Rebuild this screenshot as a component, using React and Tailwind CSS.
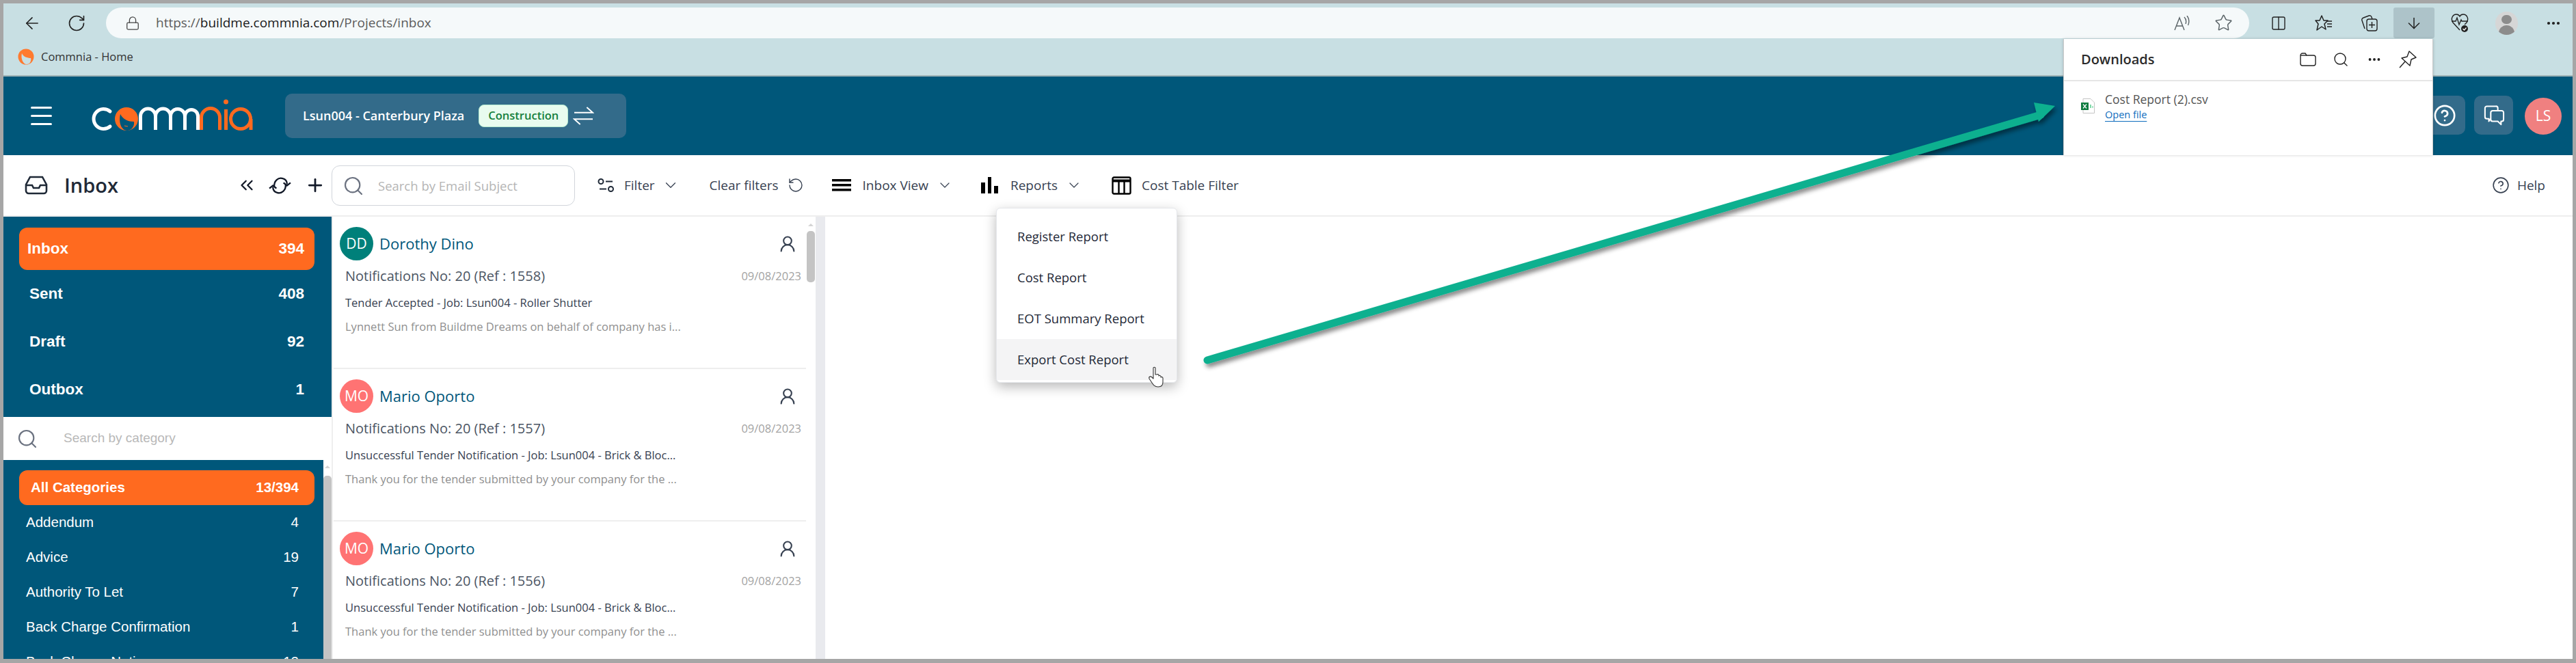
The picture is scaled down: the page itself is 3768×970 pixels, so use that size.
import React from 'react';
import {
  ArrowLeft, RotateCw, Lock, Star, ChevronDown, ChevronsLeft, Plus, Search, RotateCcw,
  CircleHelp, MoreHorizontal, Columns2, ArrowDown, UserRound,
} from 'lucide-react';

// --- small hand drawn icons (not in the packages) ---
const Logo = () => (
  <svg viewBox="130 140 245 52" className="w-[245px] h-[52px]" fill="none">
    <path d="M161 161 A14.5 14.5 0 1 0 161 183" stroke="#fff" strokeWidth="5" strokeLinecap="round" />
    <circle cx="185" cy="172" r="17" fill="#ff6a1f" />
    <path d="M176 165 C173 178 178 189 186 189 C193 189 197 182 196 176 C188 176 180 173 176 165Z" fill="#00577a" />
    <path d="M182 182 L187 183" stroke="#ff6a1f" strokeWidth="1" />
    <path d="M205.5 188 V168 A11 11 0 0 1 227.5 168 V188 M227.5 168 A11 11 0 0 1 249.5 168 V188 M249.5 168 A10.5 10.5 0 0 1 270.5 168 V188 M270.5 168 A9.5 9.5 0 0 1 289.5 168 V188" stroke="#fff" strokeWidth="5" />
    <path d="M294.5 188 V170 A13.5 13.5 0 0 1 321.5 170 V188" stroke="#ff6a1f" strokeWidth="5" />
    <path d="M330.5 188 V158" stroke="#ff6a1f" strokeWidth="5" />
    <circle cx="330.5" cy="147" r="3.5" fill="#ff6a1f" />
    <circle cx="352" cy="172" r="14.5" stroke="#ff6a1f" strokeWidth="5" />
    <path d="M367 172 V188" stroke="#ff6a1f" strokeWidth="5" />
  </svg>
);

const Favicon = () => (
  <svg viewBox="0 0 24 24" className="w-[24px] h-[24px]">
    <circle cx="12" cy="12" r="11.5" fill="#ff7a2f" />
    <path d="M6 7 C4 15 8 23 13 23 C18 23 20 18 19 14 C14 14 8 12 6 7Z" fill="#c8dfe3" />
  </svg>
);

const Swap = ({ className }) => (
  <svg viewBox="0 0 30 28" className={className} fill="none" stroke="#fff" strokeWidth="2">
    <path d="M1 9 H28 M20 1 L29 9 L20 9" />
    <path d="M29 19 H2 M10 27 L1 19 L10 19" />
  </svg>
);

const InboxTray = () => (
  <svg viewBox="0 0 34 28" className="w-[34px] h-[28px]" fill="none" stroke="#1f2937" strokeWidth="2.6" preserveAspectRatio="none">
    <path d="M8 2 H26 L32 13 V22 A4 4 0 0 1 28 26 H6 A4 4 0 0 1 2 22 V13 Z" />
    <path d="M2 14 H11 L13 18 H21 L23 14 H32" />
  </svg>
);

const Sync = () => (
  <svg viewBox="0 0 32 26" className="w-[33px] h-[27px]" fill="none" stroke="#111827" strokeWidth="2.2" preserveAspectRatio="none">
    <path d="M8 15 C7 6 14 1 20 3 C24 4 26 7 26 11" />
    <path d="M21 9 L26 13 L31 9" />
    <path d="M24 11 C25 20 18 25 12 23 C8 22 6 19 6 15" />
    <path d="M1 17 L6 13 L11 17" />
  </svg>
);

const FilterIcon = () => (
  <svg viewBox="0 0 25 20" className="w-[25px] h-[20px]" fill="none" stroke="#1f2937" strokeWidth="2">
    <circle cx="5" cy="4.5" r="3.5" />
    <path d="M12 4.5 H22" />
    <circle cx="19.5" cy="15.5" r="3.5" />
    <path d="M3 15.5 H13" />
  </svg>
);

const Lines = () => (
  <svg viewBox="0 0 28 18" className="w-[28px] h-[18px]" fill="#000">
    <rect width="28" height="3.5" />
    <rect y="7" width="28" height="3.5" />
    <rect y="14" width="28" height="3.5" />
  </svg>
);

const Bars = () => (
  <svg viewBox="0 0 25 24" className="w-[25px] h-[24px]" fill="#000">
    <rect x="0" y="8" width="6" height="16" />
    <rect x="10" y="0" width="5" height="24" />
    <rect x="19" y="13" width="6" height="11" />
  </svg>
);

const TableIcon = () => (
  <svg viewBox="0 0 29 27" className="w-[29px] h-[27px]" fill="none" stroke="#000" strokeWidth="2.4">
    <rect x="1.5" y="1.5" width="26" height="24" rx="2" />
    <path d="M1.5 6.5 H27.5" strokeWidth="4" />
    <path d="M10.5 8 V25 M18.5 8 V25" />
  </svg>
);

const Chat = () => (
  <svg viewBox="0 0 32 32" className="w-[32px] h-[30px]" fill="none" stroke="#fff" strokeWidth="2.2" strokeLinejoin="round">
    <path d="M22 8 V4 A3 3 0 0 0 19 1.5 H5 A3 3 0 0 0 2 4.5 V18 A3 3 0 0 0 5 21 H8 V25 L11 21" />
    <path d="M14 8.5 H28 A3 3 0 0 1 31 11.5 V22 A3 3 0 0 1 28 25 H27 V30 L22 25 H14 A3 3 0 0 1 11 22 V11.5 A3 3 0 0 1 14 8.5Z" />
  </svg>
);

const ReadAloud = () => (
  <svg viewBox="0 0 24 22" className="w-[24px] h-[22px]" fill="none" stroke="#5b6468" strokeWidth="1.4">
    <path d="M1 21 L8 3 L15 21 M3.5 15 H12.5" />
    <path d="M15 2 C18 5 18 9 17 12 M19 0 C23 5 22 11 20.5 14" />
  </svg>
);

const FavList = () => (
  <svg viewBox="0 0 26 24" className="w-[26px] h-[24px]" fill="none" stroke="#222" strokeWidth="1.5" strokeLinejoin="round">
    <path d="M10 1 L13 8 L19 8 L14 13 L16 21 L10 17 L3 22 L5 13 L1 8 L7 8 Z" />
    <path d="M17 9 H25 M18 13 H25 M18 17 H25" />
  </svg>
);

const Collections = () => (
  <svg viewBox="0 0 25 24" className="w-[25px] h-[24px]" fill="none" stroke="#222" strokeWidth="1.4">
    <rect x="9" y="6" width="15" height="17" rx="3" />
    <path d="M16.5 10 V19 M12 14.5 H21" />
    <path d="M6 20 L2 8 A3 3 0 0 1 4 4 L12 1 A3 3 0 0 1 16 3 L17 6" />
  </svg>
);

const Health = () => (
  <svg viewBox="0 0 26 27" className="w-[26px] h-[27px]" fill="none" stroke="#222" strokeWidth="1.4">
    <path d="M13 24 L3 13 C-1 7 3 1 8 1 C10 1 12 2 13 4 C14 2 16 1 18 1 C23 1 27 7 23 13 L20 16" />
    <path d="M1 11 H7 L9 6 L12 16 L15 9 L16 11 H25" />
    <circle cx="20" cy="22" r="5" fill="#222" stroke="none" />
    <path d="M17.5 22 L19.5 24 L22.5 20.5" stroke="#fff" strokeWidth="1.2" />
  </svg>
);

const Profile = () => (
  <div className="w-[33px] h-[34px] rounded-full bg-[#d6d6d6] overflow-hidden flex flex-col items-center">
    <div className="w-[15px] h-[15px] rounded-full bg-[#8c8c8c] mt-[5px]" />
    <div className="w-[23px] h-[14px] rounded-t-full bg-[#8c8c8c] mt-[2px]" />
  </div>
);

const ExcelFile = () => (
  <svg viewBox="0 0 20 22" className="w-[20px] h-[22px]">
    <path d="M3 .5 H14 L19.5 6 V21.5 H3 Z" fill="#fff" stroke="#c4c4c4" />
    <rect x="0" y="6" width="11" height="11" fill="#107c41" />
    <path d="M3 8.5 L8 14.5 M8 8.5 L3 14.5" stroke="#fff" strokeWidth="1.3" />
    <rect x="13" y="9" width="2" height="5" fill="#7fd8a8" />
    <rect x="16" y="11" width="2" height="3" fill="#a6e6c3" />
  </svg>
);

const Pin = () => (
  <svg viewBox="0 0 26 26" className="w-[26px] h-[26px]" fill="none" stroke="#222" strokeWidth="1.4" strokeLinejoin="round">
    <path d="M15 1 L25 10 L18 13 L16 22 L4 11 L12 9 Z" />
    <path d="M9 16 L1 25" />
  </svg>
);

const FolderIcon = () => (
  <svg viewBox="0 0 24 20" className="w-[24px] h-[20px]" fill="none" stroke="#222" strokeWidth="1.4">
    <path d="M1 4 A3 3 0 0 1 4 1 H8 L10 4 H20 A3 3 0 0 1 23 7 V16 A3 3 0 0 1 20 19 H4 A3 3 0 0 1 1 16 Z" />
    <path d="M1 4 H10" />
  </svg>
);

const Hand = () => (
  <svg viewBox="0 0 24 32" className="w-[24px] h-[32px]" fill="#fff" stroke="#333" strokeWidth="1.1" strokeLinejoin="round">
    <path d="M8 3 A2 2 0 0 1 11 3 V13 L13 13 A1.8 1.8 0 0 1 16 14 L16 15 A1.8 1.8 0 0 1 19 15.5 L19 17 A1.8 1.8 0 0 1 22 18 V24 C22 28 20 31 15 31 C10 31 8 28 6 25 L2 19 C1 16 4 15 6 17 L8 19 Z" />
  </svg>
);

// --- data ---
const folders = [
  { name: 'Sent', count: 408 },
  { name: 'Draft', count: 92 },
  { name: 'Outbox', count: 1 },
];

const categories = [
  { name: 'Addendum', count: 4 },
  { name: 'Advice', count: 19 },
  { name: 'Authority To Let', count: 7 },
  { name: 'Back Charge Confirmation', count: 1 },
  { name: 'Back Charge Notice', count: 12 },
];

const mails = [
  {
    initials: 'DD', color: 'bg-[#00807a]', name: 'Dorothy Dino', ref: 1558,
    subject: 'Tender Accepted - Job: Lsun004 - Roller Shutter',
    preview: 'Lynnett Sun from Buildme Dreams on behalf of company has i...',
  },
  {
    initials: 'MO', color: 'bg-[#ff7373]', name: 'Mario Oporto', ref: 1557,
    subject: 'Unsuccessful Tender Notification - Job: Lsun004 - Brick & Bloc...',
    preview: 'Thank you for the tender submitted by your company for the ...',
  },
  {
    initials: 'MO', color: 'bg-[#ff7373]', name: 'Mario Oporto', ref: 1556,
    subject: 'Unsuccessful Tender Notification - Job: Lsun004 - Brick & Bloc...',
    preview: 'Thank you for the tender submitted by your company for the ...',
  },
];

const reports = ['Register Report', 'Cost Report', 'EOT Summary Report', 'Export Cost Report'];

const MailRow = ({ mail }) => (
  <div className="h-[223px] shrink-0 border-b-2 border-[#eeeeee] pl-[9px] pr-[7px] pt-[15px]">
    <div className="flex items-center h-[49px]">
      <div className={`w-[49px] h-[49px] rounded-full ${mail.color} text-white text-[21px] flex items-center justify-center`}>
        {mail.initials}
      </div>
      <span className="ml-[9px] text-[22px] font-medium text-[#00577a]">{mail.name}</span>
      <UserRound className="ml-auto mr-[6px] w-[28px] h-[28px] text-[#374151]" strokeWidth={1.8} />
    </div>
    <div className="flex items-center justify-between mt-[8px] pl-[8px] h-[30px]">
      <span className="text-[20px] text-[#4b5563]">Notifications No: 20 (Ref : {mail.ref})</span>
      <span className="text-[16.5px] text-[#a3a3a3]">09/08/2023</span>
    </div>
    <div className="mt-[12px] pl-[8px] text-[16.5px] leading-[24px] text-[#374151] whitespace-nowrap">{mail.subject}</div>
    <div className="mt-[11px] pl-[8px] text-[16.5px] leading-[24px] text-[#8f8f8f] whitespace-nowrap">{mail.preview}</div>
  </div>
);

export default function App() {
  return (
    <div className="relative w-[3768px] h-[970px] bg-[#a6a6a6] pl-[5px] pr-[5px] pt-[5px] pb-[6px] overflow-hidden font-['Open_Sans',sans-serif]">
      <div className="w-full h-full flex flex-col bg-white overflow-hidden">

        {/* Browser chrome */}
        <div className="h-[107px] shrink-0 bg-[#c8dfe3] border-b-2 border-[#9fb2b6]">
          <div className="flex items-center h-[51px] pt-[6px]">
            <ArrowLeft className="ml-[28px] w-[28px] h-[28px] text-[#222]" strokeWidth={1.4} />
            <RotateCw className="ml-[37px] w-[28px] h-[28px] text-[#222]" strokeWidth={1.4} />
            <div className="ml-[29px] w-[3135px] h-[45px] rounded-full bg-[#f5f9fa] flex items-center">
              <Lock className="ml-[28px] w-[22px] h-[24px] text-[#444]" strokeWidth={1.4} />
              <span className="ml-[23px] text-[19px] text-[#5c5c5c]">
                https://<span className="text-[#1a1a1a]">buildme.commnia.com</span>/Projects/inbox
              </span>
              <div className="ml-auto mr-[24px] flex items-center gap-[35px]">
                <ReadAloud />
                <Star className="w-[27px] h-[27px] text-[#5b6468]" strokeWidth={1.3} />
              </div>
            </div>
            <Columns2 className="ml-[31px] w-[24px] h-[26px] text-[#222]" strokeWidth={1.4} />
            <div className="ml-[41px]"><FavList /></div>
            <div className="ml-[41px]"><Collections /></div>
            <div className="ml-[23px] w-[60px] h-[45px] bg-[#adc3c9] rounded-[3px] flex items-center justify-center">
              <ArrowDown className="w-[26px] h-[30px] text-[#222]" strokeWidth={1.4} />
            </div>
            <div className="ml-[24px]"><Health /></div>
            <div className="ml-[39px]"><Profile /></div>
            <MoreHorizontal className="ml-[40px] w-[24px] h-[24px] text-[#222]" strokeWidth={2.2} />
          </div>
          <div className="flex items-center h-[54px] pl-[21px]">
            <Favicon />
            <span className="ml-[10px] text-[16.5px] text-[#333]">Commnia - Home</span>
          </div>
        </div>

        {/* App header */}
        <div className="h-[115px] shrink-0 bg-[#00577a] flex items-center">
          <div className="ml-[40px] w-[31px] flex flex-col gap-[9px]">
            <div className="h-[3px] bg-white rounded-sm" />
            <div className="h-[3px] bg-white rounded-sm" />
            <div className="h-[3px] bg-white rounded-sm" />
          </div>
          <div className="ml-[54px] -mt-[3px]"><Logo /></div>
          <div className="ml-[42px] -mt-[0px] w-[499px] h-[65px] rounded-[10px] bg-[#336b8a] flex items-center pl-[26px]">
            <span className="text-[18px] font-semibold text-white whitespace-nowrap">Lsun004 - Canterbury Plaza</span>
            <span className="ml-[21px] h-[33px] px-[13px] rounded-[8px] bg-[#e8fbef] border border-[#b5ead0] text-[16.5px] font-semibold text-[#15803d] flex items-center">
              Construction
            </span>
            <Swap className="ml-[7px] w-[31px] h-[27px]" />
          </div>
          <div className="ml-auto flex items-center">
            <div className="w-[60px] h-[57px] rounded-[10px] bg-[#336b8a] flex items-center justify-center -mt-[2px]">
              <CircleHelp className="w-[34px] h-[34px] text-white" strokeWidth={1.9} />
            </div>
            <div className="ml-[13px] w-[57px] h-[57px] rounded-[10px] bg-[#336b8a] flex items-center justify-center -mt-[2px]">
              <Chat />
            </div>
            <div className="ml-[17px] mr-[16px] w-[54px] h-[54px] rounded-full bg-[#f08080] text-white text-[21px] font-medium flex items-center justify-center">LS</div>
          </div>
        </div>

        {/* Toolbar */}
        <div className="h-[90px] shrink-0 flex items-center border-b-2 border-[#eeeeee] text-[19px] text-[#374151] whitespace-nowrap">
          <div className="w-[480px] flex items-center pl-[31px] pr-[9px]">
            <InboxTray />
            <span className="ml-[24px] text-[29px] font-semibold text-[#1f2937]">Inbox</span>
            <ChevronsLeft className="ml-auto w-[30px] h-[30px] text-[#111827]" strokeWidth={1.8} />
            <div className="ml-[17px]"><Sync /></div>
            <Plus className="ml-[20px] w-[30px] h-[30px] text-[#111827]" strokeWidth={2.2} />
          </div>
          <div className="w-[356px] h-[59px] mt-[1px] rounded-[12px] border border-[#d1d5db] flex items-center pl-[15px]">
            <Search className="w-[32px] h-[32px] text-[#6b7280]" strokeWidth={1.6} />
            <span className="ml-[20px] text-[18.5px] text-[#b5b5b5]">Search by Email Subject</span>
          </div>
          <div className="ml-[33px]"><FilterIcon /></div>
          <span className="ml-[14px]">Filter</span>
          <ChevronDown className="ml-[10px] w-[26px] h-[26px] text-[#374151]" strokeWidth={1.2} />
          <span className="ml-[44px]">Clear filters</span>
          <RotateCcw className="ml-[13px] w-[24px] h-[24px] text-[#374151]" strokeWidth={1.4} />
          <div className="ml-[41px]"><Lines /></div>
          <span className="ml-[17px]">Inbox View</span>
          <ChevronDown className="ml-[12px] w-[24px] h-[24px] text-[#374151]" strokeWidth={1.2} />
          <div className="ml-[41px]"><Bars /></div>
          <span className="ml-[18px]">Reports</span>
          <ChevronDown className="ml-[12px] w-[24px] h-[24px] text-[#374151]" strokeWidth={1.2} />
          <div className="ml-[43px]"><TableIcon /></div>
          <span className="ml-[15px]">Cost Table Filter</span>
          <div className="ml-auto mr-[40px] flex items-center gap-[11px]">
            <CircleHelp className="w-[26px] h-[26px] text-[#374151]" strokeWidth={1.5} />
            <span>Help</span>
          </div>
        </div>

        {/* Body */}
        <div className="flex-1 min-h-0 flex">

          {/* Left side bar */}
          <div className="w-[480px] shrink-0 flex flex-col font-['Liberation_Sans',sans-serif] overflow-hidden">
            <div className="h-[293px] shrink-0 bg-[#00577a] pt-[16px] pl-[23px] pr-[25px] text-white text-[22.5px] font-bold">
              <div className="h-[62px] rounded-[12px] bg-[#ff6a1f] flex items-center justify-between pl-[12px] pr-[15px]">
                <span>Inbox</span><span>394</span>
              </div>
              {folders.map((f) => (
                <div key={f.name} className="h-[70px] flex items-center justify-between pl-[15px] pr-[15px]">
                  <span>{f.name}</span><span>{f.count}</span>
                </div>
              ))}
            </div>
            <div className="h-[63px] shrink-0 flex items-center pl-[19px]">
              <Search className="w-[32px] h-[32px] text-[#6b7280]" strokeWidth={1.6} />
              <span className="ml-[37px] text-[19px] text-[#b8b8b8]">Search by category</span>
            </div>
            <div className="flex-1 min-h-0 flex">
              <div className="w-[468px] bg-[#00577a] pt-[15px] pl-[23px] pr-[13px] text-white text-[20.5px] overflow-hidden">
                <div className="h-[51px] rounded-[12px] bg-[#ff6a1f] flex items-center justify-between pl-[17px] pr-[23px] font-bold">
                  <span>All Categories</span><span>13/394</span>
                </div>
                {categories.map((c) => (
                  <div key={c.name} className="h-[51px] flex items-center justify-between pl-[10px] pr-[23px]">
                    <span>{c.name}</span><span>{c.count}</span>
                  </div>
                ))}
              </div>
              <div className="w-[12px] bg-white flex flex-col items-center">
                <div className="mt-[8px] w-0 h-0 border-x-[4px] border-x-transparent border-b-[4px] border-b-[#d4d4d4]" />
                <div className="mt-[11px] w-full flex-1 rounded-t-[5px] bg-[#c4c4c4]" />
              </div>
            </div>
          </div>

          {/* Mail list */}
          <div className="w-[694px] shrink-0 flex flex-col overflow-hidden pl-[1px] border-l-2 border-[#eeeeee]">
            {mails.map((m) => <MailRow key={m.ref} mail={m} />)}
          </div>
          <div className="w-[14px] shrink-0 bg-white flex flex-col items-center">
            <div className="mt-[10px] w-0 h-0 border-x-[4px] border-x-transparent border-b-[4px] border-b-[#d4d4d4]" />
            <div className="mt-[7px] w-[12px] h-[75px] rounded-[5px] bg-[#c4c4c4]" />
          </div>
          <div className="w-[14px] shrink-0 bg-[#e9eaee]" />
          <div className="flex-1" />
        </div>
      </div>

      {/* Reports menu */}
      <div className="absolute left-[1457px] top-[304px] w-[265px] h-[256px] bg-white rounded-[6px] border border-[#e5e7eb] shadow-[0_6px_18px_rgba(0,0,0,0.28)] pt-[11px] text-[18.5px] text-[#1f2937]">
        {reports.map((r, i) => (
          <div key={r} className={`h-[60px] flex items-center pl-[30px] ${i === 3 ? 'bg-[#f4f4f5]' : ''}`}>{r}</div>
        ))}
      </div>
      <div className="absolute left-[1679px] top-[535px]"><Hand /></div>

      {/* Downloads flyout */}
      <div className="absolute left-[3018px] top-[57px] w-[541px] h-[170px] bg-white border-x border-[#c9c9c9] shadow-[0_0_4px_rgba(0,0,0,0.2)]">
        <div className="h-[62px] flex items-center border-b-2 border-[#e6e6e6] pl-[25px]">
          <span className="text-[20px] font-semibold text-[#2b2b2b]">Downloads</span>
          <div className="ml-auto flex items-center mr-[23px]">
            <FolderIcon />
            <Search className="ml-[24px] w-[24px] h-[24px] text-[#222]" strokeWidth={1.4} />
            <MoreHorizontal className="ml-[26px] w-[22px] h-[22px] text-[#222]" strokeWidth={2.2} />
            <div className="ml-[25px]"><Pin /></div>
          </div>
        </div>
        <div className="flex pl-[25px] pt-[14px]">
          <div className="mt-[11px]"><ExcelFile /></div>
          <div className="ml-[15px]">
            <div className="text-[17.5px] leading-[24px] text-[#555]">Cost Report (2).csv</div>
            <div className="text-[14.5px] leading-[22px] text-[#0f6cbd] underline underline-offset-[4px]">Open file</div>
          </div>
        </div>
      </div>

      {/* Annotation arrow */}
      <svg className="absolute left-0 top-0 w-[3768px] h-[970px] pointer-events-none" viewBox="0 0 3768 970" fill="none">
        <defs>
          <filter id="arrowShadow" x="-5%" y="-20%" width="110%" height="140%">
            <feDropShadow dx="3" dy="5" stdDeviation="3" floodColor="#000" floodOpacity="0.45" />
          </filter>
        </defs>
        <g filter="url(#arrowShadow)">
          <path d="M1766 527 L2985 168" stroke="#0bb08f" strokeWidth="11" strokeLinecap="round" />
          <path d="M2975 150 L3006 155 L2982 178 Z" fill="#0bb08f" />
        </g>
      </svg>
    </div>
  );
}
